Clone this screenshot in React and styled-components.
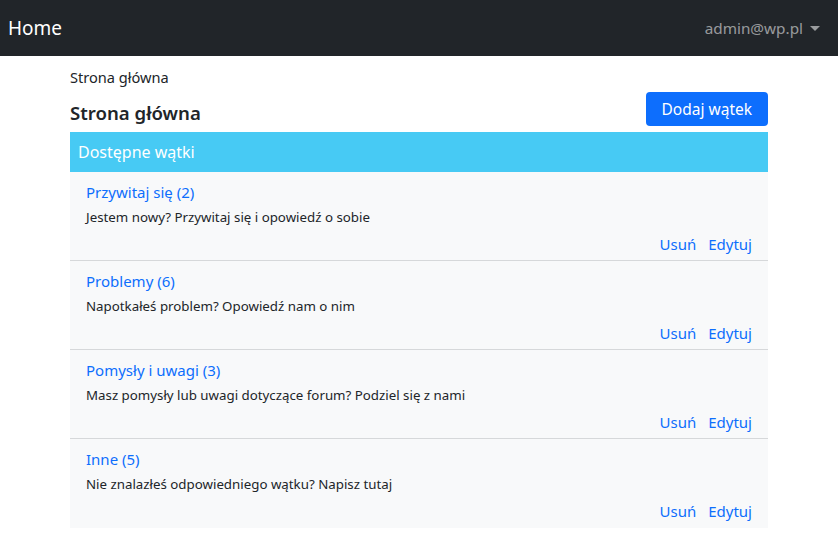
import React from "react";
import styled, { createGlobalStyle } from "styled-components";

const COLORS = {
  dark: "#212529",
  blue: "#0d6efd",
  info: "#47caf4",
  light: "#f8f9fa",
  border: "#d6d8da",
  text: "#212529",
};

const GlobalStyle = createGlobalStyle`
  body {
    margin: 0;
    font-family: "Noto Sans", "Open Sans", sans-serif;
    color: ${COLORS.text};
    background: #fff;
  }
`;

const Navbar = styled.nav`
  height: 56px;
  background: ${COLORS.dark};
  display: flex;
  align-items: center;
  justify-content: space-between;
  padding: 0 18px 0 8px;
`;

const Brand = styled.a`
  color: #fff;
  font-size: 19px;
  text-decoration: none;
`;

const UserMenu = styled.a`
  color: rgba(255, 255, 255, 0.55);
  font-size: 15.3px;
  display: flex;
  align-items: center;
  gap: 7px;

  &::after {
    content: "";
    border-top: 5px solid rgba(255, 255, 255, 0.55);
    border-left: 5px solid transparent;
    border-right: 5px solid transparent;
  }
`;

/* Page */

const Container = styled.main`
  width: 698px;
  margin: 0 auto;
  padding-top: 11px;
`;

const Breadcrumb = styled.div`
  font-size: 14.6px;
  line-height: 21px;
`;

const TitleRow = styled.div`
  display: flex;
  justify-content: space-between;
  align-items: flex-end;
  margin-bottom: 6px;
`;

const Title = styled.h1`
  font-size: 18.6px;
  font-weight: 600;
  margin: 0 0 1px;
`;

const Button = styled.button`
  background: ${COLORS.blue};
  color: #fff;
  border: none;
  border-radius: 4px;
  font-family: inherit;
  font-size: 15.5px;
  padding: 0 16px;
  height: 34px;
  margin-top: 4px;
`;

/* Topics */

const Panel = styled.section`
  background: ${COLORS.light};
`;

const PanelHeader = styled.div`
  background: ${COLORS.info};
  color: #fff;
  height: 40px;
  display: flex;
  align-items: center;
  padding: 0 8px;
  font-size: 16px;
`;

const Topic = styled.div`
  height: 89px;
  box-sizing: border-box;
  padding: 8px 16px 0;
  border-bottom: ${(p) => (p.last ? "none" : `1px solid ${COLORS.border}`)};
  display: flex;
  flex-direction: column;
`;

const TopicTitle = styled.a`
  color: ${COLORS.blue};
  font-size: 15px;
  line-height: 24px;
`;

const TopicDescription = styled.p`
  margin: 3px 0 0;
  font-size: 13.3px;
  line-height: 21px;
`;

const Actions = styled.div`
  display: flex;
  justify-content: flex-end;
  gap: 12px;
  margin-top: 4px;
`;

const ActionLink = styled.a`
  color: ${COLORS.blue};
  font-size: 15px;
  line-height: 24px;
`;

const topics = [
  { id: 1, title: "Przywitaj się (2)", description: "Jestem nowy? Przywitaj się i opowiedź o sobie" },
  { id: 2, title: "Problemy (6)", description: "Napotkałeś problem? Opowiedź nam o nim" },
  { id: 3, title: "Pomysły i uwagi (3)", description: "Masz pomysły lub uwagi dotyczące forum? Podziel się z nami" },
  { id: 4, title: "Inne (5)", description: "Nie znalazłeś odpowiedniego wątku? Napisz tutaj" },
];

const App = () => {
  return (
    <>
      <GlobalStyle />
      <Navbar>
        <Brand>Home</Brand>
        <UserMenu>admin@wp.pl</UserMenu>
      </Navbar>
      <Container>
        <Breadcrumb>Strona główna</Breadcrumb>
        <TitleRow>
          <Title>Strona główna</Title>
          <Button>Dodaj wątek</Button>
        </TitleRow>
        <Panel>
          <PanelHeader>Dostępne wątki</PanelHeader>
          {topics.map((topic, i) => (
            <Topic key={topic.id} last={i === topics.length - 1}>
              <TopicTitle>{topic.title}</TopicTitle>
              <TopicDescription>{topic.description}</TopicDescription>
              <Actions>
                <ActionLink>Usuń</ActionLink>
                <ActionLink>Edytuj</ActionLink>
              </Actions>
            </Topic>
          ))}
        </Panel>
      </Container>
    </>
  );
};

export default App;
